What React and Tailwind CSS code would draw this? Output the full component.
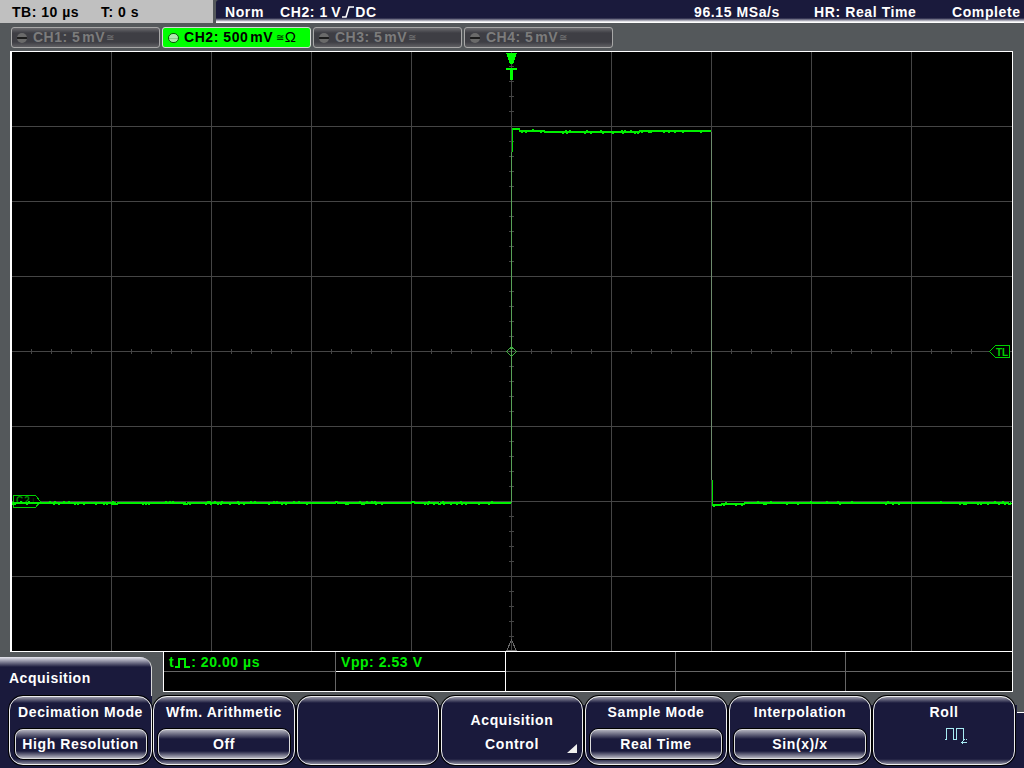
import React from "react";

const channels = [
  { label: "CH1: 5", unit: "mV", active: false },
  { label: "CH2: 500", unit: "mV", active: true },
  { label: "CH3: 5", unit: "mV", active: false },
  { label: "CH4: 5", unit: "mV", active: false },
];

const softkeys = [
  { title: "Wfm. Arithmetic", value: "Off" },
  { blank: true },
  { lines: ["Acquisition", "Control"] },
  { title: "Sample Mode", value: "Real Time" },
  { title: "Interpolation", value: "Sin(x)/x" },
];

// small seeded noise so the trace looks the same on every run
function makeNoise(seed) {
  let s = seed;
  return () => {
    s = (s * 9301 + 49297) % 233280;
    return s / 233280;
  };
}

function tracePoints(from, to, level) {
  const rnd = makeNoise(from + 17);
  const pts = [];
  for (let x = from; x <= to; x += 1) {
    const r = rnd();
    let jitter = 0;
    if (r > 0.92) jitter = 1;
    if (r < 0.06) jitter = -1;
    pts.push(`${x},${level(x) + jitter}`);
  }
  return pts.join(" ");
}

function ScopeGrid() {
  const vLines = [111, 211, 311, 411, 511, 611, 711, 811, 911];
  const hLines = [126, 201, 276, 351, 426, 501, 576];
  const xTicks = [];
  for (let x = 31; x < 1011; x += 20) xTicks.push(x);
  const yTicks = [];
  for (let y = 66; y < 651; y += 15) yTicks.push(y);

  const highLevel = (x) => (x < 520 ? 129 : x < 545 ? 131 : x < 640 ? 132 : 131);
  const lowRight = (x) => (x < 722 ? 505 : x < 745 ? 504 : 503);

  return (
    <svg
      width="1000"
      height="599"
      viewBox="12 52 1000 599"
      className="block bg-black"
      shapeRendering="crispEdges"
    >
      {vLines.map((x) => (
        <line key={x} x1={x + 0.5} y1="52" x2={x + 0.5} y2="651" stroke="#454545" />
      ))}
      {hLines.map((y) => (
        <line key={y} x1="11" y1={y + 0.5} x2="1012" y2={y + 0.5} stroke="#454545" />
      ))}
      {xTicks.map((x) => (
        <line key={x} x1={x + 0.5} y1="349" x2={x + 0.5} y2="354" stroke="#454545" />
      ))}
      {yTicks.map((y) => (
        <line key={y} x1="509" y1={y + 0.5} x2="514" y2={y + 0.5} stroke="#454545" />
      ))}

      {/* channel ground marker, the trace runs over it */}
      <polygon
        points="13.5,495.5 35.5,495.5 40.5,501.5 35.5,507.5 13.5,507.5"
        fill="#000"
        stroke="#00d000"
      />
      <text x="16" y="504" fontSize="10" fontWeight="700" letterSpacing="1" fill="#008c00" fontFamily="Liberation Sans, sans-serif">
        C2↓
      </text>

      {/* trace */}
      <line x1="511.5" y1="152" x2="511.5" y2="503" stroke="#58a058" />
      <line x1="711.5" y1="132" x2="711.5" y2="480" stroke="#6d8a6d" />
      <line x1="512.5" y1="128" x2="512.5" y2="152" stroke="#00e000" />
      <line x1="712.5" y1="480" x2="712.5" y2="505" stroke="#00e000" />
      <polyline
        points={tracePoints(12, 511, () => 503)}
        fill="none"
        stroke="#00f000"
        strokeWidth="2"
      />
      <polyline
        points={tracePoints(513, 711, highLevel)}
        fill="none"
        stroke="#00f000"
        strokeWidth="2"
      />
      <polyline
        points={tracePoints(713, 1011, lowRight)}
        fill="none"
        stroke="#00f000"
        strokeWidth="2"
      />

      {/* trigger position marker */}
      <polygon points="506,53 517,53 513,64 510,64" fill="#00ff00" />
      <rect x="506" y="68" width="11" height="2" fill="#00ff00" />
      <rect x="510" y="68" width="3" height="12" fill="#00ff00" />

      {/* center diamond */}
      <polygon
        points="511.5,347 516.5,351.5 511.5,356.5 506.5,351.5"
        fill="none"
        stroke="#40b040"
      />

      {/* bottom trigger marker */}
      <polygon points="511.5,640 516,650 507,650" fill="none" stroke="#6a6a6a" />

      {/* trigger level marker */}
      <polygon
        points="989.5,351.5 995.5,345.5 1009.5,345.5 1009.5,357.5 995.5,357.5"
        fill="#000"
        stroke="#00d000"
      />
      <text x="996" y="356" fontSize="10" fontWeight="700" fill="#00d000" fontFamily="Liberation Sans, sans-serif">
        TL
      </text>
    </svg>
  );
}

function ChannelTab({ ch }) {
  if (ch.active) {
    return (
      <div className="flex h-[21px] w-[149px] items-center rounded-[3px] border border-[#d8d8d8] bg-[#00ff00] pl-[5px] text-[14px] font-bold tracking-[0.55px] text-black">
        <span className="mr-[5px] h-[10px] w-[11px] rounded-full border border-[#0a5a0a] bg-[linear-gradient(#b0e8b0_45%,#207020_45%,#b0e8b0_60%)]" />
        <span>{ch.label}</span>
        <span className="ml-[2px]">{ch.unit}</span>
        <span className="ml-[3px] text-[10px] font-normal">≅</span>
        <span className="text-[15px] font-normal">Ω</span>
      </div>
    );
  }
  return (
    <div className="flex h-[21px] w-[149px] items-center rounded-[3px] border border-[#a8a8a8] bg-[linear-gradient(#6a6a6e,#3e3e44_5px,#3e3e44_14px,#606064)] pl-[5px] text-[14px] font-bold tracking-[0.5px] text-[#7c7c7c]">
      <span className="mr-[6px] h-[10px] w-[10px] rounded-full bg-[linear-gradient(#6a6a6a_40%,#1c1c1c_40%,#1c1c1c_60%,#6a6a6a_60%)]" />
      <span>{ch.label}</span>
      <span className="ml-[2px]">{ch.unit}</span>
      <span className="ml-[1px] text-[10px] font-normal">≅</span>
    </div>
  );
}

function PulseIcon({ color }) {
  return (
    <svg width="15" height="11" viewBox="0 0 15 11" className="mx-[1px] inline-block" shapeRendering="crispEdges">
      <path d="M0 9.5H4V1.5H10V9.5H15" fill="none" stroke={color} strokeWidth="2" />
    </svg>
  );
}

function EdgeIcon() {
  return (
    <svg width="12" height="12" viewBox="0 0 12 12" className="mx-[1px]">
      <path d="M0 11H4L7 1H12" fill="none" stroke="#fff" strokeWidth="1.6" />
    </svg>
  );
}

function RollIcon() {
  return (
    <svg width="24" height="17" viewBox="0 0 24 17" shapeRendering="crispEdges">
      <path
        d="M0.5 11.5H2.5V0.5H9.5V11.5H12.5V0.5H19.5V11.5"
        fill="none"
        stroke="#a8ecf4"
      />
      <rect x="20" y="11" width="1" height="1" fill="#a8ecf4" />
      <rect x="22" y="11" width="1" height="1" fill="#a8ecf4" />
      <path d="M17.5 14.5H23M17.5 14.5L19.5 12.5M17.5 14.5L19.5 16.5" fill="none" stroke="#a8ecf4" />
    </svg>
  );
}

const keyShell =
  "flex h-[69px] flex-col items-center rounded-[14px] border border-[#eeeeee] shadow-[0_0_0_1px_#000] bg-[linear-gradient(#9a9aaa,#1a1a3c_6px,#1a1a3c_62px,#8a8a9c)] text-[14px] font-bold tracking-[0.6px] text-white";

const keyValue =
  "mt-[9px] flex h-[30px] w-[132px] items-center justify-center rounded-[8px] border border-[#dddddd] shadow-[0_0_0_1px_#000] bg-[linear-gradient(#b0b0bc,#1a1a3c_9px,#1a1a3c_21px,#b4b4c0)]";

function Softkey({ item, width }) {
  return (
    <div className={keyShell} style={{ width }}>
      {item.title && <div className="mt-[7px] leading-[16px]">{item.title}</div>}
      {item.value && <div className={keyValue}>{item.value}</div>}
      {item.lines && (
        <div className="relative h-full w-full">
          <div className="mt-[15px] text-center leading-[16px]">{item.lines[0]}</div>
          <div className="mt-[8px] text-center leading-[16px]">{item.lines[1]}</div>
          <div className="absolute right-[5px] bottom-[11px] h-0 w-0 border-b-[9px] border-l-[10px] border-b-[#f0f0f0] border-l-transparent" />
        </div>
      )}
    </div>
  );
}

export default function App() {
  return (
    <div className="flex h-[768px] w-[1024px] flex-col overflow-hidden bg-[#54585b] font-['Liberation_Sans',sans-serif]">
      {/* status bar */}
      <div className="flex h-[23px] shrink-0">
        <div className="flex w-[213px] items-center bg-[#c0c0c0] pt-[2px] pl-[12px] text-[14px] font-bold tracking-[0.5px] text-black">
          <span className="w-[89px]">TB: 10 µs</span>
          <span>T: 0 s</span>
        </div>
        <div className="ml-[3px] flex flex-1 items-center rounded-tl-[3px] bg-[linear-gradient(#1a1a3c_18px,#ffffff_22px)] pt-[1px] pl-[9px] text-[14px] font-bold tracking-[0.6px] text-white">
          <span className="w-[55px]">Norm</span>
          <span className="flex items-center">
            CH2: 1&#8201;V
            <EdgeIcon />
            DC
          </span>
          <span className="ml-auto w-[120px]">96.15 MSa/s</span>
          <span className="w-[138px]">HR: Real Time</span>
          <span className="w-[72px] whitespace-nowrap">Complete</span>
        </div>
      </div>

      {/* channel tabs */}
      <div className="mt-[4px] flex h-[21px] shrink-0 gap-[2px] pl-[11px]">
        {channels.map((ch) => (
          <ChannelTab key={ch.label} ch={ch} />
        ))}
      </div>

      {/* screen */}
      <div className="mt-[3px] ml-[10px] w-[1003px] shrink-0 border-t border-r border-b border-l-2 border-white">
        <ScopeGrid />
      </div>

      {/* menu title and measurement table */}
      <div className="flex h-[44px] shrink-0">
        <div className="mt-[5px] flex h-[39px] w-[152px] items-center rounded-tr-[12px] border-r border-[#d8d8d8] bg-[linear-gradient(#e8e8f0,#1a1a3c_10px)] pt-[4px] pl-[9px] text-[14px] font-bold tracking-[0.5px] text-white">
          Acquisition
        </div>
        <div className="ml-[11px] grid h-[40px] w-[850px] grid-cols-[172px_170px_170px_170px_166px] grid-rows-[20px_19px] border-r border-b border-l border-white bg-black text-[14px] font-bold tracking-[0.55px] text-[#00ee00]">
          <div className="flex items-center border-r border-b border-[#666] pt-[2px] pl-[5px]">
            t
            <PulseIcon color="#00ee00" />: 20.00 µs
          </div>
          <div className="flex items-center border-r border-b border-white pt-[2px] pl-[5px]">Vpp: 2.53 V</div>
          <div className="border-r border-b border-[#666]" />
          <div className="border-r border-b border-[#666]" />
          <div className="border-b border-[#666]" />
          <div className="border-r border-[#666]" />
          <div className="border-r border-white" />
          <div className="border-r border-[#666]" />
          <div className="border-r border-[#666]" />
          <div />
        </div>
      </div>

      {/* softkeys */}
      <div className="flex flex-1 gap-[2px] bg-[linear-gradient(#54585b_9px,#1a1a3c_9px)]">
        <div className="-mr-[1px] h-full w-[152px] bg-[#1a1a3c] pl-[9px]">
          <div className={keyShell + " w-[143px]"}>
            <div className="mt-[7px] leading-[16px]">Decimation Mode</div>
            <div className={keyValue}>High Resolution</div>
          </div>
        </div>
        {softkeys.map((item, i) => (
          <Softkey key={i} item={item} width={142} />
        ))}
        <div className={keyShell + " w-[142px]"}>
          <div className="mt-[7px] leading-[16px]">Roll</div>
          <div className="mt-[8px] ml-[24px]">
            <RollIcon />
          </div>
        </div>
        <div className="h-full flex-1 bg-[linear-gradient(#54585b_16px,#ffffff_16px,#ffffff_17px,#1a1a3c_17px)]" />
      </div>
    </div>
  );
}
